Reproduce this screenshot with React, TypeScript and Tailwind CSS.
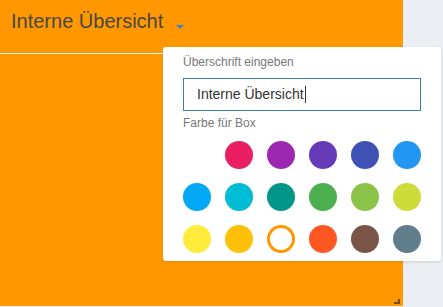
const swatches: (string | null)[] = [
  null, "#e91e63", "#9c27b0", "#673ab7", "#3f51b5", "#2196f3",
  "#03a9f4", "#00bcd4", "#009688", "#4caf50", "#8bc34a", "#cddc39",
  "#ffeb3b", "#ffc107", "#ff9800", "#ff5722", "#795548", "#607d8b",
];

const selected = "#ff9800";

export default function App() {
  return (
    <div className="relative h-[307px] w-[443px] overflow-hidden bg-[#ebeef3] font-['Liberation_Sans',Arial,sans-serif]">
      <div className="relative h-[306px] w-[403px] bg-[#ff9800]">
        <div className="flex h-[54px] items-start border-b border-white pl-[11px] pt-[7px]">
          <span className="text-[20px] leading-[28px] text-[#474747]">Interne Übersicht</span>
          <span className="ml-[13px] mt-[18px] h-0 w-0 border-x-4 border-t-4 border-x-transparent border-t-[#3d85c6]" />
        </div>
        {/* resize grip */}
        <div className="absolute bottom-[2px] right-[3px] h-[5px] w-[6px] border-b-2 border-r-2 border-[#7a4a14]" />
      </div>

      <div className="absolute left-[163px] top-[47px] w-[278px] rounded-[3px] bg-white px-5 pb-2 pt-[7px] shadow-[0_1px_3px_rgba(0,0,0,0.12)]">
        <div className="text-[12px] leading-4 text-[#777]">Überschrift eingeben</div>
        <div className="mt-2 flex h-[33px] items-center border border-[#3a7fb3] pl-[13px] text-[14px] text-[#333]">
          <span>Interne Übersicht</span>
          <span className="ml-px h-[17px] w-px bg-[#333]" />
        </div>
        <div className="mt-1 text-[12px] leading-4 text-[#777]">Farbe für Box</div>
        <div className="mt-[10px] grid grid-cols-6 gap-[14px]">
          {swatches.map((c, i) =>
            c === null ? (
              <div key={i} className="h-7 w-7" />
            ) : c === selected ? (
              <div key={i} className="h-7 w-7 rounded-full border-[3px] border-[#ff9800] bg-white" />
            ) : (
              <div key={i} className="h-7 w-7 rounded-full" style={{ backgroundColor: c }} />
            )
          )}
        </div>
      </div>
    </div>
  );
}
